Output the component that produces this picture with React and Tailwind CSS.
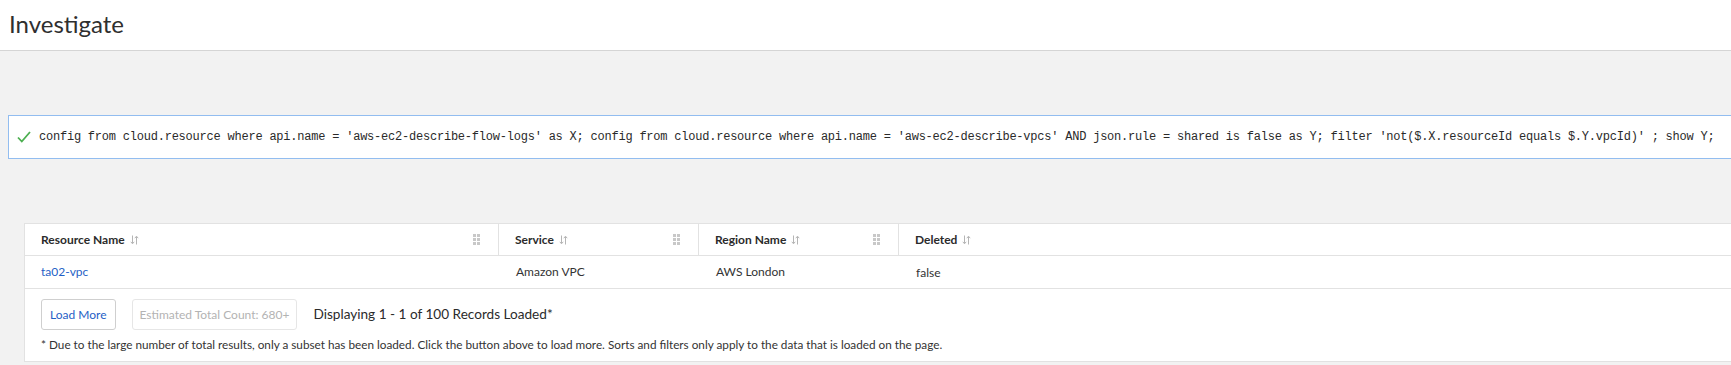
import React from 'react'

const QUERY = "config from cloud.resource where api.name = 'aws-ec2-describe-flow-logs' as X; config from cloud.resource where api.name = 'aws-ec2-describe-vpcs' AND json.rule = shared is false as Y; filter 'not($.X.resourceId equals $.Y.vpcId)' ; show Y;"

const columns = ['Resource Name', 'Service', 'Region Name', 'Deleted']

const rows = [
  { name: 'ta02-vpc', service: 'Amazon VPC', region: 'AWS London', deleted: 'false' },
]

function SortIcon() {
  return (
    <svg width="9" height="10" viewBox="0 0 9 10" className="ml-[5px] text-[#b5b5b5]" fill="none" stroke="currentColor" strokeWidth="1">
      <path d="M2.5 0.5v8M0.8 6.8l1.7 2 1.7-2" />
      <path d="M6.5 9.5v-8M4.8 3.2l1.7-2 1.7 2" />
    </svg>
  )
}

function Grip() {
  return (
    <div className="grid grid-cols-2 gap-[1px]">
      {[0, 1, 2, 3, 4, 5].map(i => (
        <span key={i} className="w-[3px] h-[3px] bg-[#c8c8c8]" />
      ))}
    </div>
  )
}

export default function App() {
  return (
    <div className="min-h-[365px] bg-[#f2f2f2] overflow-hidden font-['Lato',sans-serif] text-[#333]">

      {/* Header */}
      <div className="h-[51px] bg-white border-b border-[#d5d5d5] flex items-center px-[9px]">
        <h1 className="text-[24px] leading-none text-[#2f2f2f] -mt-[2px]">Investigate</h1>
      </div>

      <div className="pt-[64px] pl-[8px]">

        {/* Query */}
        <div className="w-[1760px] h-[44px] bg-white border border-[#92bdf0] flex items-center pl-[8px]">
          <svg width="14" height="12" viewBox="0 0 14 12" fill="none" stroke="#4caf50" strokeWidth="1.8" className="mr-[8px]">
            <path d="M1 6.5l3.8 4L13 1" />
          </svg>
          <span className="font-['Liberation_Mono',monospace] text-[12px] tracking-[-0.22px] text-[#2a2a2a] whitespace-nowrap">
            {QUERY}
          </span>
        </div>

        {/* Table */}
        <div className="mt-[64px] ml-[16px] w-[1760px] bg-white border border-[#e2e2e2]">
          <div className="grid grid-cols-[474px_200px_200px_1fr] h-[32px] border-b border-[#e2e2e2]">
            {columns.map((c, i) => (
              <div
                key={c}
                className={`flex items-center justify-between pl-[16px] pr-[18px] ${i < 3 ? 'border-r border-[#e2e2e2]' : ''}`}
              >
                <div className="flex items-center">
                  <span className="text-[12px] font-bold text-[#2b2b2b]">{c}</span>
                  <SortIcon />
                </div>
                {i < 3 && <Grip />}
              </div>
            ))}
          </div>

          {rows.map(r => (
            <div key={r.name} className="grid grid-cols-[474px_200px_200px_1fr] h-[33px] items-center border-b border-[#e2e2e2] text-[12px]">
              <div className="pl-[16px] text-[#1f5fc6]">{r.name}</div>
              <div className="pl-[17px]">{r.service}</div>
              <div className="pl-[17px]">{r.region}</div>
              <div className="pl-[17px] pt-[1px]">{r.deleted}</div>
            </div>
          ))}

          <div className="h-[72px] pl-[16px] pt-[10px]">
            <div className="flex items-center">
              <button className="h-[31px] px-[8px] border border-[#cfcfcf] rounded-[3px] bg-white text-[12px] text-[#1f5fc6]">
                Load More
              </button>
              <div className="ml-[16px] h-[31px] px-[7px] border border-[#e6e6e6] rounded-[3px] flex items-center text-[12px] text-[#b3b3b3]">
                Estimated Total Count: 680+
              </div>
              <span className="ml-[16px] text-[13.6px] text-[#2b2b2b]">Displaying 1 - 1 of 100 Records Loaded*</span>
            </div>
            <p className="mt-[6px] text-[11.75px] text-[#333]">
              * Due to the large number of total results, only a subset has been loaded. Click the button above to load more. Sorts and filters only apply to the data that is loaded on the page.
            </p>
          </div>
        </div>
      </div>
    </div>
  )
}
